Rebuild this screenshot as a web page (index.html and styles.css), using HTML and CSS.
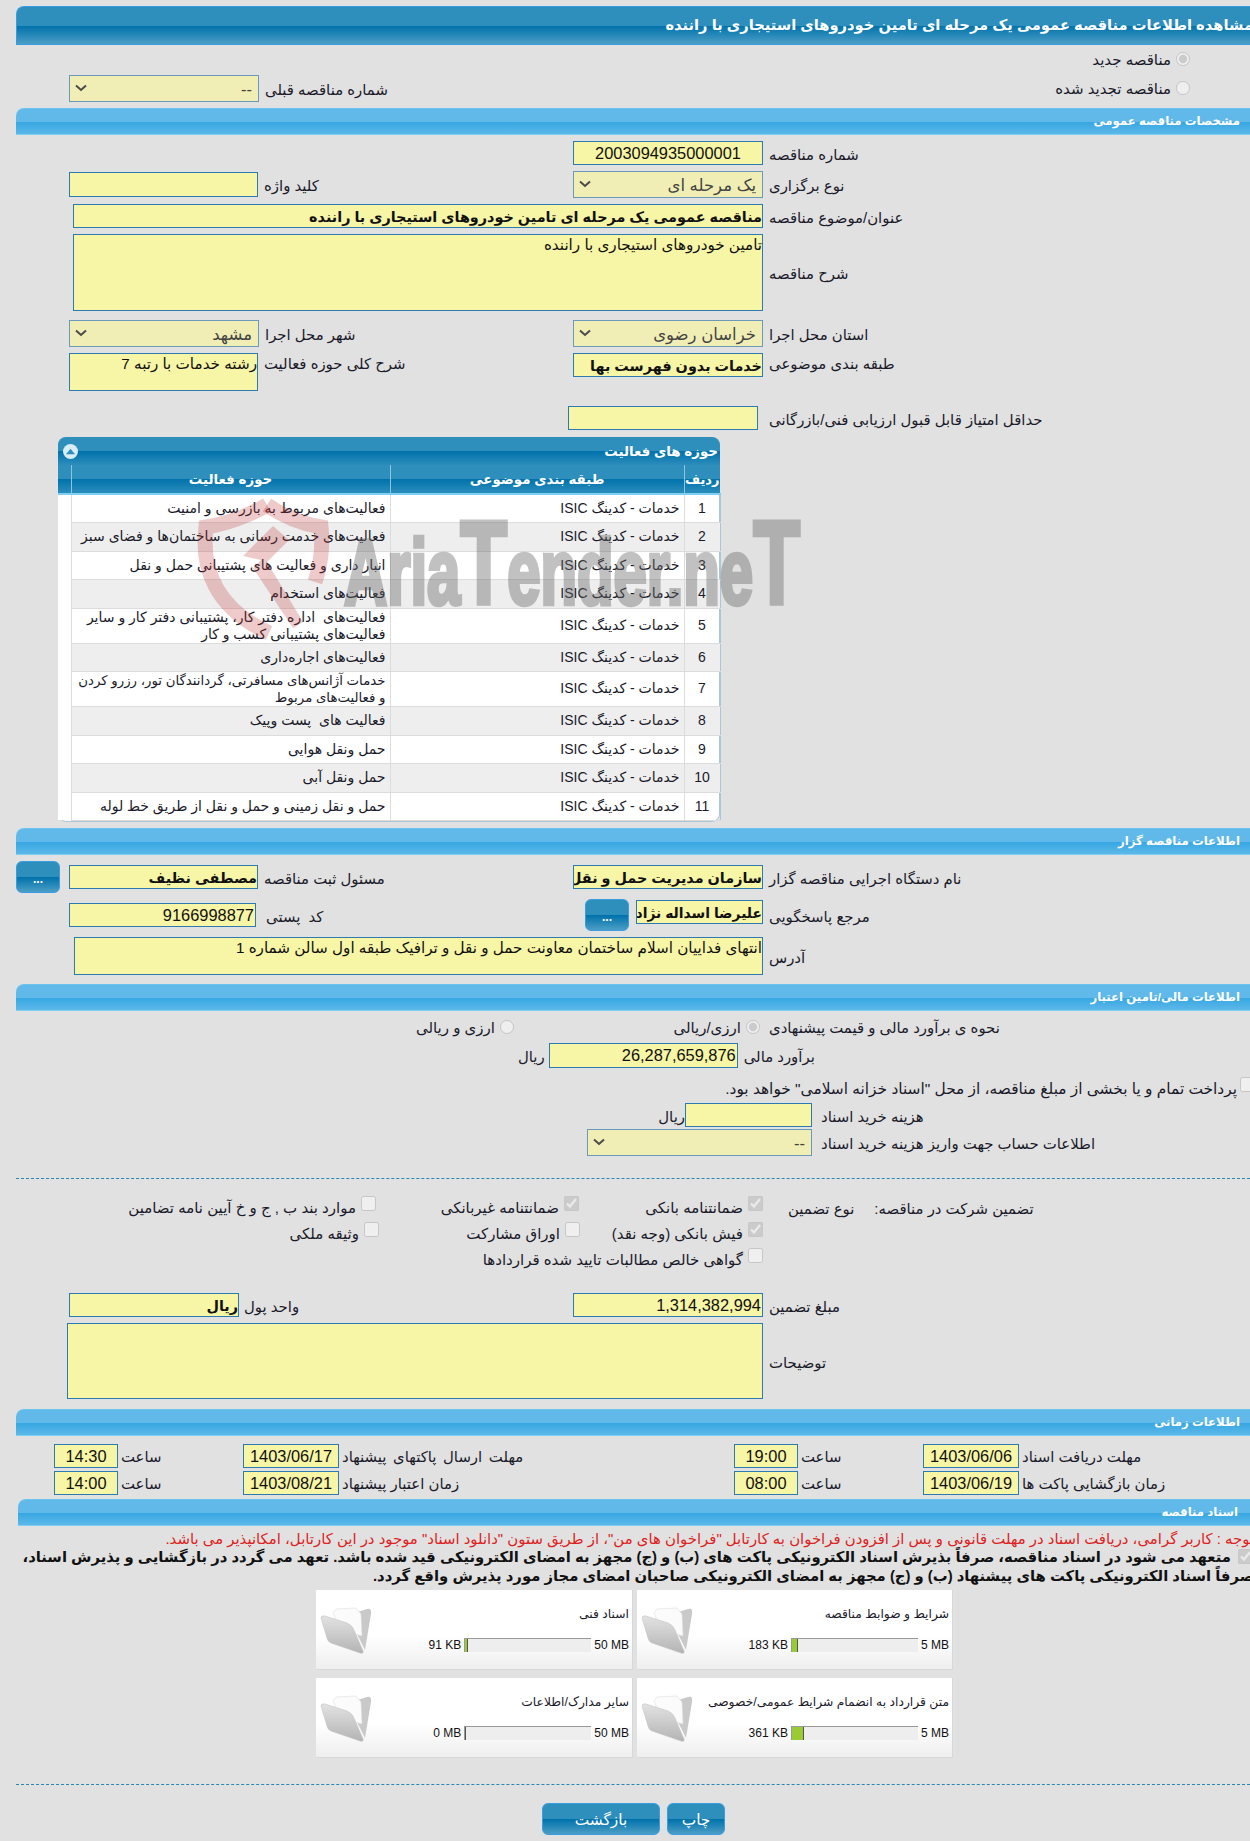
FILE: index.html
```html
<!DOCTYPE html>
<html lang="fa">
<head>
<meta charset="utf-8">
<title>مشاهده اطلاعات مناقصه</title>
<link rel="stylesheet" href="styles.css">
</head>
<body>
<div class="page">
  <div class="title-band"><span class="title-text">مشاهده اطلاعات مناقصه عمومی یک مرحله ای تامین خودروهای استیجاری با راننده</span></div>

  <div class="renew-one"><label class="opt"><input type="radio" checked disabled><span>مناقصه جدید</span></label></div>
  <div class="row form renew-two">
    <div class="select w190"><svg class="chev" viewBox="0 0 12 8"><path d="M1 1.5l5 4.5 5-4.5"/></svg><span>--</span></div>
    <span class="label lab-gap">شماره مناقصه قبلی</span>
    <label class="opt opt-end"><input type="radio" disabled><span>مناقصه تجدید شده</span></label>
  </div>

  <div class="band band-a">مشخصات مناقصه عمومی</div>

  <div class="row form mt6">
    <div class="l"></div>
    <div class="r"><div class="field w190 h24 ltr-center">2003094935000001</div><span class="label">شماره مناقصه</span></div>
  </div>
  <div class="row form mt6">
    <div class="l"><div class="field w189 h25"></div><span class="label">کلید واژه</span></div>
    <div class="r"><div class="select w190 strong"><svg class="chev" viewBox="0 0 12 8"><path d="M1 1.5l5 4.5 5-4.5"/></svg><span>یک مرحله ای</span></div><span class="label">نوع برگزاری</span></div>
  </div>
  <div class="row form mt6 inset4">
    <div class="field w690 h24 bold">مناقصه عمومی یک مرحله ای تامین خودروهای استیجاری با راننده</div><span class="label">عنوان/موضوع مناقصه</span>
  </div>
  <div class="row form mt6 inset4">
    <div class="field w690 h77 small">تامین خودروهای استیجاری با راننده</div><span class="label">شرح مناقصه</span>
  </div>
  <div class="row form mt9">
    <div class="l"><div class="select w190"><svg class="chev" viewBox="0 0 12 8"><path d="M1 1.5l5 4.5 5-4.5"/></svg><span>مشهد</span></div><span class="label">شهر محل اجرا</span></div>
    <div class="r"><div class="select w190"><svg class="chev" viewBox="0 0 12 8"><path d="M1 1.5l5 4.5 5-4.5"/></svg><span>خراسان رضوی</span></div><span class="label">استان محل اجرا</span></div>
  </div>
  <div class="row form mt6 top">
    <div class="l"><div class="field w189 h38 small">رشته خدمات با رتبه 7</div><span class="label label-top">شرح کلی حوزه فعالیت</span></div>
    <div class="r"><div class="field w190 h24 bold">خدمات بدون فهرست بها</div><span class="label label-top">طبقه بندی موضوعی</span></div>
  </div>
  <div class="row mt15 score-row">
    <div class="field w190 h24"></div><span class="label">حداقل امتیاز قابل قبول ارزیابی فنی/بازرگانی</span>
  </div>

  <div class="panel">
    <div class="panel-head">
      <span class="collapse"><svg viewBox="0 0 8 6"><path d="M4 .5L8 5.5H0z"/></svg></span>
      <span class="panel-title">حوزه های فعالیت</span>
    </div>
    <table class="grid">
      <thead>
        <tr><th class="c0"></th><th class="c1">حوزه فعالیت</th><th class="c2">طبقه بندی موضوعی</th><th class="c3">ردیف</th></tr>
      </thead>
      <tbody>
        <tr class="h28"><td class="c0"></td><td>فعالیت‌های مربوط به بازرسی و امنیت</td><td>خدمات - کدینگ ISIC</td><td class="num">1</td></tr>
        <tr class="alt h29"><td class="c0"></td><td>فعالیت‌های خدمت رسانی به ساختمان‌ها و فضای سبز</td><td>خدمات - کدینگ ISIC</td><td class="num">2</td></tr>
        <tr class="h28"><td class="c0"></td><td>انبار داری و فعالیت های پشتیبانی حمل و نقل</td><td>خدمات - کدینگ ISIC</td><td class="num">3</td></tr>
        <tr class="alt h29"><td class="c0"></td><td>فعالیت‌های استخدام</td><td>خدمات - کدینگ ISIC</td><td class="num">4</td></tr>
        <tr class="h35"><td class="c0"></td><td class="pre">فعالیت‌های  اداره دفتر کار، پشتیبانی دفتر کار و سایر فعالیت‌های پشتیبانی کسب و کار</td><td>خدمات - کدینگ ISIC</td><td class="num">5</td></tr>
        <tr class="alt h28"><td class="c0"></td><td>فعالیت‌های اجاره‌داری</td><td>خدمات - کدینگ ISIC</td><td class="num">6</td></tr>
        <tr class="h35"><td class="c0"></td><td class="tight">خدمات آژانس‌های مسافرتی، گردانندگان تور، رزرو کردن<br>و فعالیت‌های مربوط</td><td>خدمات - کدینگ ISIC</td><td class="num">7</td></tr>
        <tr class="alt h29"><td class="c0"></td><td class="pre">فعالیت های  پست وپیک</td><td>خدمات - کدینگ ISIC</td><td class="num">8</td></tr>
        <tr class="h28"><td class="c0"></td><td>حمل ونقل هوایی</td><td>خدمات - کدینگ ISIC</td><td class="num">9</td></tr>
        <tr class="alt h29"><td class="c0"></td><td>حمل ونقل آبی</td><td>خدمات - کدینگ ISIC</td><td class="num">10</td></tr>
        <tr class="h28"><td class="c0"></td><td>حمل و نقل زمینی و حمل و نقل از طریق خط لوله</td><td>خدمات - کدینگ ISIC</td><td class="num">11</td></tr>
      </tbody>
    </table>
    <svg class="watermark" viewBox="0 0 620 145">
      <g class="wm-shield">
        <path class="wm-line" d="M76 9C58 20 34 28 15 31C10 72 24 112 78 137"/>
        <path class="wm-line" d="M76 9C92 20 112 28 130 31C132 50 130 68 124 86"/>
        <path class="wm-fill" d="M52 60L82 30L98 44L76 66L112 126L102 132L62 72L70 64Z"/>
      </g>
      <text class="wm-text" x="153" y="108" textLength="456" lengthAdjust="spacingAndGlyphs">Aria<tspan class="wm-big">T</tspan>ender.ne<tspan class="wm-big">T</tspan></text>
    </svg>
  </div>

  <div class="band band-b">اطلاعات مناقصه گزار</div>

  <div class="row btn-row mt6">
    <div class="btn-dots">...</div>
    <div class="l l-after-btn"><div class="field w189 h24 bold">مصطفی نظیف</div><span class="label">مسئول ثبت مناقصه</span></div>
    <div class="r"><div class="field w190 h24 bold clip">سازمان مدیریت حمل و نقل</div><span class="label">نام دستگاه اجرایی مناقصه گزار</span></div>
  </div>
  <div class="row form mt6">
    <div class="l"><div class="field w187 h24 num-field">9166998877</div><span class="label lab-gap2">کد پستی</span></div>
    <div class="r"><div class="btn-dots btn-dots-b">...</div><div class="field w127 h24 bold clip raised">علیرضا اسداله نژاد</div><span class="label">مرجع پاسخگویی</span></div>
  </div>
  <div class="row form mt6 inset5">
    <div class="field w689 h38 small">انتهای فداییان اسلام ساختمان معاونت حمل و نقل و ترافیک طبقه اول سالن شماره 1</div><span class="label">آدرس</span>
  </div>

  <div class="band band-c">اطلاعات مالی/تامین اعتبار</div>

  <div class="row way-row">
    <label class="opt way-b"><input type="radio" disabled><span>ارزی و ریالی</span></label>
    <label class="opt way-a"><input type="radio" checked disabled><span>ارزی/ریالی</span></label>
    <span class="label way-label">نحوه ی برآورد مالی و قیمت پیشنهادی</span>
  </div>
  <div class="row est-row">
    <span class="label est-unit">ریال</span>
    <div class="field w189 h25 num-field">26,287,659,876</div>
    <span class="label">برآورد مالی</span>
  </div>
  <div class="treasury">
    <label class="opt"><input type="checkbox" disabled><span>پرداخت تمام و یا بخشی از مبلغ مناقصه، از محل "اسناد خزانه اسلامی" خواهد بود.</span></label>
  </div>
  <div class="row cost-row">
    <span class="label cost-unit">ریال</span>
    <div class="field w127 h24"></div>
    <span class="label lab-gap3">هزینه خرید اسناد</span>
  </div>
  <div class="row acct-row">
    <div class="select w225"><svg class="chev" viewBox="0 0 12 8"><path d="M1 1.5l5 4.5 5-4.5"/></svg><span>--</span></div>
    <span class="label lab-gap3">اطلاعات حساب جهت واریز هزینه خرید اسناد</span>
  </div>

  <div class="dash dash-a"></div>

  <div class="g-row g-first">
    <label class="opt g1"><input type="checkbox" disabled><span>موارد بند ب , ج و خ آیین نامه تضامین</span></label>
    <label class="opt g2"><input type="checkbox" checked disabled><span>ضمانتنامه غیربانکی</span></label>
    <label class="opt g3"><input type="checkbox" checked disabled><span>ضمانتنامه بانکی</span></label>
    <span class="label g-type">نوع تضمین</span>
    <span class="label g-head">تضمین شرکت در مناقصه:</span>
  </div>
  <div class="g-row g-second">
    <label class="opt g1"><input type="checkbox" disabled><span>وثیقه ملکی</span></label>
    <label class="opt g2"><input type="checkbox" disabled><span>اوراق مشارکت</span></label>
    <label class="opt g3"><input type="checkbox" checked disabled><span>فیش بانکی (وجه نقد)</span></label>
  </div>
  <div class="g-row">
    <span class="g1"></span><span class="g2"></span>
    <label class="opt g3"><input type="checkbox" disabled><span>گواهی خالص مطالبات تایید شده قراردادها</span></label>
  </div>

  <div class="row form mt-amount">
    <div class="l"><div class="field w170 h24 bold">ریال</div><span class="label lab-gap4">واحد پول</span></div>
    <div class="r"><div class="field w190 h24 num-field">1,314,382,994</div><span class="label">مبلغ تضمین</span></div>
  </div>
  <div class="row mt6 notes-row">
    <div class="field w696 h76"></div><span class="label">توضیحات</span>
  </div>

  <div class="band band-d">اطلاعات زمانی</div>

  <div class="time-row t-first">
    <div class="t-cell"><div class="field t-time">14:30</div><span class="label">ساعت</span></div>
    <div class="t-cell t-wide"><div class="field t-date">1403/06/17</div><span class="label t-long">مهلت ارسال پاکتهای پیشنهاد</span></div>
    <div class="t-cell"><div class="field t-time">19:00</div><span class="label">ساعت</span></div>
    <div class="t-cell"><div class="field t-date">1403/06/06</div><span class="label">مهلت دریافت اسناد</span></div>
  </div>
  <div class="time-row">
    <div class="t-cell"><div class="field t-time">14:00</div><span class="label">ساعت</span></div>
    <div class="t-cell t-wide"><div class="field t-date">1403/08/21</div><span class="label">زمان اعتبار پیشنهاد</span></div>
    <div class="t-cell"><div class="field t-time">08:00</div><span class="label">ساعت</span></div>
    <div class="t-cell"><div class="field t-date">1403/06/19</div><span class="label">زمان بازگشایی پاکت ها</span></div>
  </div>

  <div class="band band-e">اسناد مناقصه</div>

  <div class="notice">توجه : کاربر گرامی، دریافت اسناد در مهلت قانونی و پس از افزودن فراخوان به کارتابل "فراخوان های من"، از طریق ستون "دانلود اسناد" موجود در این کارتابل، امکانپذیر می باشد.</div>
  <div class="commit"><input type="checkbox" checked disabled> متعهد می شود در اسناد مناقصه، صرفاً بذیرش اسناد الکترونیکی پاکت های (ب) و (ج) مجهز به امضای الکترونیکی قید شده باشد. تعهد می گردد در بازگشایی و پذیرش اسناد، صرفاً اسناد الکترونیکی پاکت های پیشنهاد (ب) و (ج) مجهز به امضای الکترونیکی صاحبان امضای مجاز مورد پذیرش واقع گردد.</div>

  <div class="cards">
    <div class="card">
      <svg class="folder" viewBox="0 0 52 48"><use href="#fold"/></svg>
      <div class="card-body">
        <div class="card-title">اسناد فنی</div>
        <div class="meter-row"><span>91 KB</span><div class="meter"><div class="fill" style="width:2px"></div></div><span>50 MB</span></div>
      </div>
    </div>
    <div class="card">
      <svg class="folder" viewBox="0 0 52 48"><use href="#fold"/></svg>
      <div class="card-body">
        <div class="card-title">شرایط و ضوابط مناقصه</div>
        <div class="meter-row"><span>183 KB</span><div class="meter"><div class="fill" style="width:5px"></div></div><span>5 MB</span></div>
      </div>
    </div>
    <div class="card">
      <svg class="folder" viewBox="0 0 52 48"><use href="#fold"/></svg>
      <div class="card-body">
        <div class="card-title">سایر مدارک/اطلاعات</div>
        <div class="meter-row"><span>0 MB</span><div class="meter"><div class="fill" style="width:0"></div></div><span>50 MB</span></div>
      </div>
    </div>
    <div class="card">
      <svg class="folder" viewBox="0 0 52 48"><use href="#fold"/></svg>
      <div class="card-body">
        <div class="card-title">متن قرارداد به انضمام شرایط عمومی/خصوصی</div>
        <div class="meter-row"><span>361 KB</span><div class="meter"><div class="fill" style="width:11px"></div></div><span>5 MB</span></div>
      </div>
    </div>
  </div>

  <div class="dash dash-b"></div>

  <div class="actions">
    <div class="action w118">بازگشت</div>
    <div class="action w58">چاپ</div>
  </div>
</div>

<svg class="defs" aria-hidden="true">
  <defs>
    <linearGradient id="fg" x1="0" y1="0" x2="0" y2="1"><stop offset="0" stop-color="#e2e2e2"/><stop offset="1" stop-color="#b4b4b4"/></linearGradient>
    <g id="fold">
      <path fill="#c9c9c9" d="M28 9L47 3Q52 2 51 8L45 44L38 30Z"/>
      <path fill="#fbfbfb" stroke="#ddd" stroke-width=".6" d="M13 7L16 3L36 2L41 8L42 30L20 24Z"/>
      <path fill="url(#fg)" stroke="#c4c4c4" stroke-width=".6" d="M1 12Q1 9 5 10L27 17Q32 19 34 24L43 45Q44 48 40 47L11 37Q8 36 7 32Z"/>
    </g>
  </defs>
</svg>
</body>
</html>
```

FILE: styles.css
```css
* { box-sizing: border-box; }
html, body { margin: 0; padding: 0; }
body {
  width: 1250px;
  height: 1841px;
  overflow: hidden;
  background: #e1e1e1;
  font-family: "Liberation Sans", "DejaVu Sans", sans-serif;
  font-size: 15px;
  color: #1a1a2a;
}
.defs { position: absolute; width: 0; height: 0; }
.page { width: 1234px; margin-left: 16px; padding-top: 6px; }

.title-band {
  height: 39px;
  width: 1234px;
  direction: rtl;
  overflow: hidden;
  white-space: nowrap;
  line-height: 36px;
  border: 1px solid #3a9ce0;
  border-width: 1px 0 1px 1px;
  border-top-left-radius: 8px;
  background: linear-gradient(#2e8fbd 0, #2e8fbd 50%, #0072ab 51%, #4c9ec6 100%);
  color: #fff;
  font-weight: bold;
  font-size: 14.7px;
}
.title-text { display: inline-block; margin-right: -3px; }

.band {
  height: 27px;
  direction: rtl;
  padding-right: 10px;
  line-height: 24px;
  color: #fff;
  font-weight: bold;
  font-size: 11.7px;
  border-top: 1px solid #6cc4ee;
  border-bottom: 1px solid #7dd0f2;
  border-top-left-radius: 8px;
  background: linear-gradient(#61b9e9 0, #61b9e9 50%, #36a6e2 51%, #5cb8e8 100%);
}
.band-a { margin-top: 7px; }
.band-b { margin-top: 6px; }
.band-c { margin-top: 9px; }
.band-d { margin-top: 10px; }
.band-e { margin-top: 1px; margin-left: 2px; padding-right: 12px; }

.row { display: flex; align-items: center; }
.row.top { align-items: flex-start; }
.form { margin-left: 53px; }
.inset4 { margin-left: 57px; }
.inset5 { margin-left: 58px; }
.mt6 { margin-top: 6px; }
.mt9 { margin-top: 9px; }
.mt15 { margin-top: 15px; }
.l { width: 504px; display: flex; align-items: center; gap: 6px; }
.r { display: flex; align-items: center; gap: 6px; }
.row.top .l, .row.top .r { align-items: flex-start; }

.label { direction: rtl; white-space: nowrap; font-size: 14.9px; line-height: 16px; padding-top: 3px; margin-left: 6px; }
.l .label, .r .label { margin-left: 0; }
.label-top { padding-top: 0; margin-top: 3px; }
.lab-gap { margin-left: 6px; }
.l .lab-gap2 { margin-left: 4px; word-spacing: 4px; }
.lab-gap3 { margin-left: 9px; }
.l .lab-gap4 { margin-left: -1px; }
.score-row { margin-left: 552px; }
.score-row .label { margin-left: 11px; }

.field {
  direction: rtl;
  background: #f7f5a6;
  border: 1px solid #2b7bb0;
  color: #111;
  font-size: 16.4px;
  line-height: 22px;
  white-space: nowrap;
  overflow: hidden;
  flex: none;
}
.field.small { font-size: 15.2px; line-height: 20px; white-space: normal; }
.field.bold { font-weight: bold; font-size: 14.4px; line-height: 24px; }
.ltr-center { direction: ltr; text-align: center; }
.clip { text-overflow: clip; }
.raised { margin-top: -6px; }
.field.raised { font-size: 13.9px; }
.num-field { padding-right: 1px; }
.w127 { width: 127px; }
.w170 { width: 170px; }
.w187 { width: 187px; }
.w189 { width: 189px; }
.w190 { width: 190px; }
.w225 { width: 225px; }
.w689 { width: 689px; }
.w690 { width: 690px; }
.w696 { width: 696px; }
.h24 { height: 24px; }
.h25 { height: 25px; }
.h38 { height: 38px; }
.h76 { height: 76px; }
.h77 { height: 77px; }

.select {
  position: relative;
  height: 27px;
  flex: none;
  direction: rtl;
  background: #f0eeb4;
  border: 1px solid #6a9ab8;
  color: #444;
  font-size: 16.5px;
  line-height: 26px;
  padding-right: 6px;
  white-space: nowrap;
}
.select span { display: inline-block; }
.chev { position: absolute; left: 5px; top: 8px; width: 12px; height: 8px; fill: none; stroke: #4a4a4a; stroke-width: 2; }

.opt { display: inline-flex; direction: rtl; align-items: flex-start; white-space: nowrap; gap: 5px; line-height: 18px; font-size: 15px; }
.opt input { margin: 0; flex: none; }
.opt input[type="radio"] { width: 14px; height: 14px; margin-top: 3px; }
.opt input[type="checkbox"] { width: 15px; height: 15px; margin-top: -1px; }
.opt span { padding-top: 2px; }
.renew-one { height: 30px; padding-top: 4px; direction: rtl; padding-right: 60px; }
.renew-two { height: 26px; }
.opt-end { margin-left: auto; margin-right: 60px; }

.panel {
  position: relative;
  margin: 7px 0 0 42px;
  width: 662px;
  height: 385px;
  background: #fff;
  border: 1px solid #a9c7d9;
  border-radius: 8px;
}
.panel-head {
  height: 28px;
  display: flex;
  justify-content: space-between;
  align-items: center;
  margin: -1px -1px 0;
  padding: 0 2px 0 5px;
  border-radius: 8px 8px 0 0;
  background: linear-gradient(#2e8fbd 0, #2e8fbd 50%, #0072ab 51%, #2c8dbb 100%);
}
.panel-title { direction: rtl; color: #fff; font-weight: bold; font-size: 13.4px; }
.collapse { width: 15px; height: 15px; border-radius: 50%; background: #d9edf7; display: flex; align-items: center; justify-content: center; }
.collapse svg { width: 9px; height: 7px; fill: #2e8fbd; }
.grid { border-collapse: collapse; table-layout: fixed; width: 662px; margin-left: -1px; }
.grid th {
  height: 29px;
  padding: 0;
  direction: rtl;
  color: #fff;
  font-size: 13.4px;
  font-weight: bold;
  text-align: center;
  border-left: 1px solid #8fc4dc;
  border-bottom: 2px solid #7dd0f2;
  background: linear-gradient(#2e8fbd 0, #2e8fbd 50%, #0072ab 51%, #2c8dbb 100%);
}
.grid th:first-child { border-left: 0; }
.grid th.c3 { font-size: 13px; }
.c0 { width: 13px; }
.c1 { width: 319px; }
.c2 { width: 294px; }
.c3 { width: 36px; }
.grid td {
  padding: 0 4px 0 3px;
  direction: rtl;
  text-align: right;
  font-size: 14px;
  line-height: 17px;
  border-left: 1px solid #dcdcdc;
  border-bottom: 1px solid #dcdcdc;
  vertical-align: middle;
}
.grid td.c0 { background: #fff; border-left: 0; border-bottom: 0; }
.grid td.num { text-align: center; font-size: 14px; padding: 0; border-right: 1px solid #a9c7d9; }
.grid td.pre { white-space: pre-wrap; }
.grid td.tight { font-size: 13.3px; white-space: nowrap; }
.alt td { background: #eeeeee; }
.h28 td { height: 28px; }
.h29 td { height: 29px; }
.h35 td { height: 35px; }

.watermark { position: absolute; left: 132px; top: 58px; width: 620px; height: 145px; pointer-events: none; }
.wm-line { fill: none; stroke: rgba(190, 50, 50, .26); stroke-width: 15; }
.wm-fill { fill: rgba(190, 50, 50, .26); }
.wm-text { fill: #666; stroke: #666; stroke-width: 4.5; opacity: .4; font: bold 92px "Liberation Sans", sans-serif; }
.wm-big { font-size: 118px; }

.btn-row { margin-left: 0; }
.btn-dots {
  flex: none;
  width: 44px;
  height: 32px;
  border: 1px solid #3a9ce0;
  border-radius: 6px;
  background: linear-gradient(#2e8fbd 0, #2e8fbd 50%, #0072ab 51%, #4c9ec6 100%);
  color: #fff;
  text-align: center;
  font-weight: bold;
  font-size: 12px;
  line-height: 34px;
}
.l-after-btn { margin-left: 9px; }
.btn-dots-b { margin-left: 12px; margin-right: 1px; }

.way-row { height: 25px; margin-top: 3px; padding-left: 402px; }
.way-a { width: 246px; }
.way-b { width: 96px; }
.way-label { margin-left: 9px; }
.est-row { margin-top: 4px; padding-left: 502px; }
.est-unit { margin: 0 4px 0 0; }
.treasury { height: 24px; margin-top: 4px; margin-right: -5px; direction: rtl; padding-top: 6px; }
.treasury .opt { gap: 3px; font-size: 15.4px; }
.cost-row { margin-top: 7px; padding-left: 645px; }
.cost-unit { margin: 0; width: 24px; }
.acct-row { margin-top: 2px; padding-left: 571px; }

.dash { border-top: 1px dashed #2a86b5; height: 0; }
.dash-a { margin-top: 22px; }
.dash-b { margin-top: 26px; }

.g-row { display: flex; height: 26px; align-items: center; }
.g-first { margin-top: 15px; }
.g1 { width: 360px; display: inline-flex; }
.g2 { width: 203px; display: inline-flex; }
.g3 { width: 184px; display: inline-flex; }
.g-second .g1 { width: 363px; }
.g-second .g2 { width: 201px; }
.g-second .g3 { width: 183px; }
.g-type { margin-left: 25px; }
.g-head { margin-left: 20px; }

.mt-amount { margin-top: 21px; }
.notes-row { margin-left: 51px; }

.time-row { display: flex; margin-left: 38px; height: 27px; }
.t-first { margin-top: 8px; }
.t-cell { width: 189px; display: flex; align-items: flex-start; gap: 3px; flex: none; }
.t-wide { width: 491px; }
.t-cell .label { margin: 0; padding-top: 5px; }
.t-cell .t-long { word-spacing: 2.5px; }
.t-time, .t-date { height: 24px; text-align: center; direction: ltr; }
.t-time { width: 64px; }
.t-date { width: 96px; }

.notice { direction: rtl; white-space: nowrap; color: #d22; font-size: 14.9px; line-height: 18px; margin-top: 4px; margin-right: -4px; }
.commit { direction: rtl; font-weight: bold; color: #111; font-size: 14.8px; line-height: 19px; width: 1244px; margin-left: -6px; }
.commit input { width: 17px; height: 15px; margin: 0 0 0 2px; vertical-align: -2px; }

.cards { display: grid; grid-template-columns: 317px 316px; column-gap: 4px; row-gap: 8px; margin: 4px 0 0 300px; }
.card {
  height: 80px;
  display: flex;
  background: linear-gradient(#fff 0, #fff 58%, #eeeeee 100%);
  border-bottom: 1px solid #d8d8d8;
  border-right: 1px solid #d8d8d8;
}
.folder { width: 52px; height: 48px; flex: none; margin: 16px 0 0 4px; }
.card-body { flex: 1; padding-right: 3px; }
.card-title { direction: rtl; font-size: 12.3px; line-height: 16px; margin-top: 16px; white-space: nowrap; }
.meter-row { display: flex; justify-content: flex-end; align-items: center; gap: 3px; margin-top: 16px; font-size: 12px; white-space: nowrap; color: #111; }
.meter { width: 127px; height: 14px; background: #eee; border-top: 1px solid #999; border-left: 1px solid #999; display: flex; }
.fill { background: #9c3; border-right: 1px solid #555; flex: none; box-sizing: content-box; }

.actions { display: flex; gap: 7px; margin: 18px 0 0 526px; }
.action {
  height: 32px;
  direction: rtl;
  border: 1px solid #3a9ce0;
  border-radius: 6px;
  background: linear-gradient(#2e8fbd 0, #2e8fbd 50%, #0072ab 51%, #4c9ec6 100%);
  color: #fff;
  text-align: center;
  font-size: 15.4px;
  line-height: 31px;
}
.w118 { width: 118px; }
.w58 { width: 58px; }
```
